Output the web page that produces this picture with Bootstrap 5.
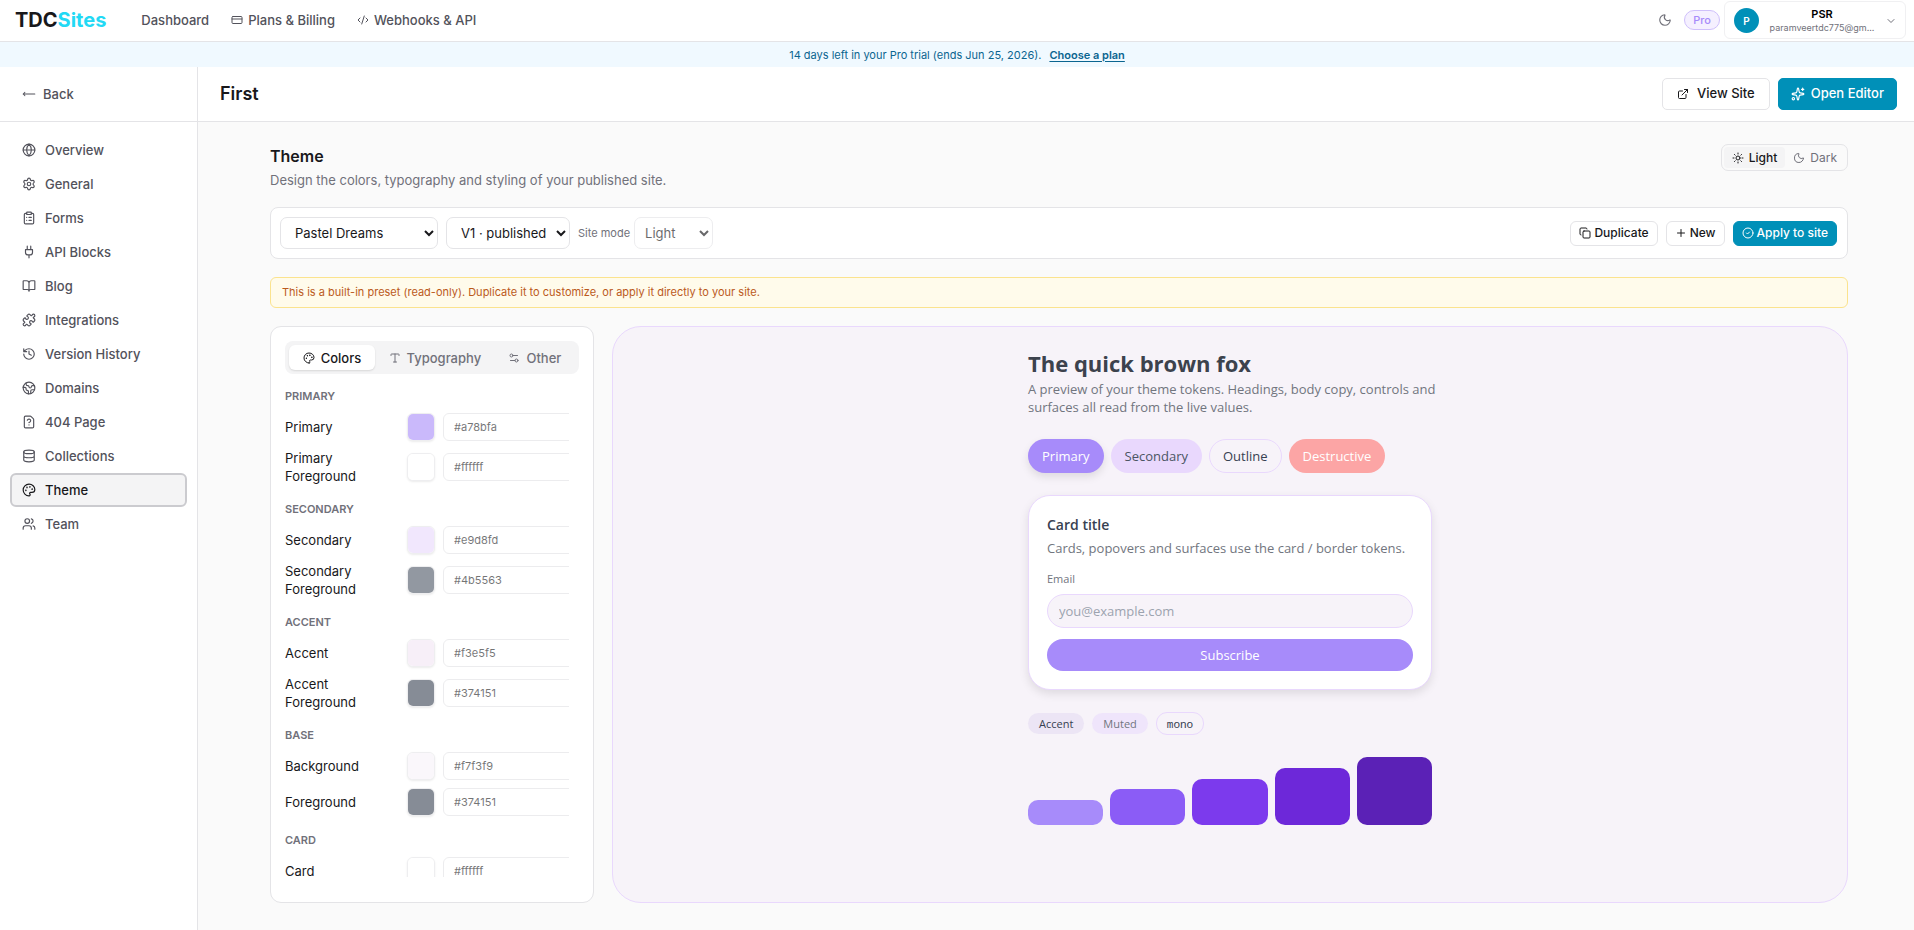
<!DOCTYPE html>
<html lang="en">
<head>
  <meta charset="UTF-8" />
  <meta name="viewport" content="width=device-width, initial-scale=1.0"/>
  <title>Theme - TDCSites</title>
  <link rel="stylesheet" href="https://cdn.jsdelivr.net/npm/bootstrap@5.3.0/dist/css/bootstrap.min.css">
  <style>
    body {
      background: #fafafa;
      font-family: Inter, "Liberation Sans", sans-serif;
      font-size: 13px;
      line-height: 18px;
      color: #18181b;
    }
    a { color: inherit; text-decoration: none; }
    .ico {
      width: 14px;
      height: 14px;
      flex: none;
      fill: none;
      stroke: currentColor;
      stroke-width: 2;
      stroke-linecap: round;
      stroke-linejoin: round;
    }
    .ico-sm { width: 12px; height: 12px; }
    .text-soft { color: #71717a; }
    .line { border-color: #e4e4e7 !important; }

    /* top bar */
    .topbar { height: 42px; padding: 0 8px 1px 15px; }
    .logo { font-size: 20px; font-weight: 700; margin-right: 35px; }
    .logo span { color: #22d9f5; }
    .toplinks { gap: 22px; }
    .toplink { color: #52525b; font-weight: 500; gap: 5px; }
    .plan {
      font-size: 11px;
      font-weight: 500;
      line-height: 18px;
      padding: 0 8px;
      color: #a78bfa;
      background: #f5f0ff;
      border: 1px solid #cfc0fb;
    }
    .user {
      width: 182px;
      height: 38px;
      padding: 1px 8px 0 9px;
      border: 1px solid #f0f0f2;
      border-radius: 6px;
      background: #fff;
    }
    .avatar {
      width: 25px;
      height: 25px;
      background: #0090b8;
      color: #fff;
      font-size: 10px;
      font-weight: 600;
    }
    .user-name { font-size: 11px; font-weight: 600; line-height: 14px; }
    .user-mail { font-size: 9px; line-height: 14px; }
    .trial { height: 25px; background: #f0f9ff; color: #0b6590; font-size: 11px; }
    .trial a { font-weight: 600; text-decoration: underline; text-underline-offset: 2px; }

    /* sidebar */
    .side { width: 198px; flex: none; min-height: calc(100vh - 67px); }
    .headrow { height: 55px; padding: 0 17px 0 22px; }
    .back { gap: 7px; color: #52525b; font-weight: 500; }
    .back .ico { stroke-width: 1.75; }
    .side-list { padding: 11px 10px; }
    .side-item {
      height: 34px;
      padding: 0 10px;
      gap: 9px;
      color: #52525b;
      font-weight: 500;
      border: 2px solid transparent;
      border-radius: 6px;
    }
    .side-item.current { background: #f4f4f5; border-color: #cbcbcf; color: #18181b; }

    /* buttons */
    .btn { display: inline-flex; align-items: center; justify-content: center; font-weight: 500; }
    .btn-plain, .btn-plain:hover { background: #fff; border-color: #e4e4e7; color: #18181b; }
    .btn-brand, .btn-brand:hover { background: #0090b8; border-color: #0090b8; color: #fff; }
    .btn-head { height: 32px; padding: 0 14px; gap: 8px; font-size: 13px; border-radius: 5px; }
    .btn-head.btn-brand { padding: 0 12px; gap: 6px; }
    .btn-tool { height: 25px; padding: 0 8px; gap: 3px; font-size: 12px; border-radius: 6px; }

    .page { padding: 22px 66px 28px 72px; }
    .site-title { font-size: 18px; font-weight: 600; line-height: 24px; }
    .page-top { margin-bottom: 16px; min-height: 47px; }
    .page-title { font-size: 16px; font-weight: 600; line-height: 24px; margin-bottom: 3px; }
    .mode { border: 1px solid #e4e4e7; border-radius: 7px; padding: 2px; height: 27px; }
    .mode button {
      border: 0;
      background: none;
      color: #71717a;
      font-size: 12px;
      line-height: 20px;
      padding: 0 8px;
      gap: 5px;
      border-radius: 4px;
    }
    .mode button.on { background: #f4f4f5; color: #18181b; font-weight: 500; }
    .bar { min-height: 52px; padding: 9px 10px 9px 9px; background: #fff; border-radius: 8px; }
    .pick {
      height: 32px;
      padding: 0 0 0 10px;
      border: 1px solid #e4e4e7;
      border-radius: 7px;
      background: #fff;
      color: #18181b;
    }
    .pick:disabled { opacity: 0.65; padding-left: 6px; }
    .pick-theme { width: 158px; }
    .pick-version { width: 124px; }
    .pick-mode { width: 79px; }
    .mode-label { font-size: 11px; }
    .note {
      margin: 18px 0;
      padding: 6px 11px;
      font-size: 11px;
      color: #bb5a1c;
      background: #fffbeb;
      border: 1px solid #fbe38e;
      border-radius: 6px;
      line-height: 17px;
    }

    /* token editor */
    .panels { height: calc(100vh - 353px); min-height: 400px; gap: 18px; }
    .editor { width: 324px; flex: none; padding: 14px 14px 25px; background: #fff; border-radius: 11px; }
    .tabs { height: 33px; padding: 4px; background: #f4f4f5; border-radius: 8px; }
    .tabs button {
      flex: 1 1 auto;
      border: 0;
      background: none;
      color: #71717a;
      font-weight: 500;
      gap: 6px;
      border-radius: 6px;
    }
    .tabs button.on { background: #fff; color: #18181b; box-shadow: 0 1px 2px rgba(0,0,0,0.12); }
    .tokens { flex: 1 1 0; overflow: hidden; margin-right: 10px; padding-top: 14px; }
    .token-group { margin-bottom: 16px; }
    .group-name { font-size: 11px; font-weight: 600; line-height: 16px; margin-bottom: 9px; }
    .token { gap: 8px; margin-bottom: 8px; }
    .token label { width: 114px; flex: none; padding-right: 20px; }
    .swatch {
      width: 28px;
      height: 28px;
      flex: none;
      padding: 0;
      border: 1px solid #e4e4e7;
      border-radius: 6px;
      overflow: hidden;
      opacity: 0.6;
      appearance: none;
      background: #fff;
      box-shadow: 0 1px 2px rgba(0,0,0,0.12);
    }
    .swatch::-webkit-color-swatch-wrapper { padding: 0; }
    .swatch::-webkit-color-swatch { border: 0; }
    .hex {
      width: 150px;
      height: 28px;
      flex: none;
      padding: 0 10px;
      font-size: 11px;
      color: #18181b;
      background: #fff;
      border: 1px solid #e0e0e4;
      border-radius: 6px;
      opacity: 0.6;
    }

    /* live preview */
    .preview {
      flex: 1 1 0;
      background: #f7f3f9;
      border: 1px solid #e9d8fd;
      border-radius: 29px;
      font-family: "Open Sans", "Noto Sans", sans-serif;
      color: #374151;
      overflow: hidden;
    }
    .sample { width: 404px; padding-top: 21px; }
    .sample h2 { font-size: 22px; font-weight: 700; line-height: 30px; margin-bottom: 2px; color: #3c424d; }
    .sample-lead { margin: 0 -12px 23px 0; }
    .text-dim { color: #71757e; }
    .pills { gap: 7px; margin-bottom: 22px; }
    .pill {
      height: 34px;
      padding: 0 13px;
      border: 1px solid transparent;
      border-radius: 17px;
      font-weight: 500;
    }
    .pill-primary { background: #a78bfa; color: #fff; box-shadow: 0 4px 8px rgba(0,0,0,0.1); }
    .pill-secondary { background: #e9d8fd; color: #4b5563; }
    .pill-outline { background: transparent; border-color: #e9d8fd; color: #374151; }
    .pill-danger { background: #fca5a5; color: #fff; }
    .sample-card {
      padding: 18px;
      background: #fff;
      border: 1px solid #e9d8fd;
      border-radius: 22px;
      box-shadow: 0 4px 10px rgba(0,0,0,0.1);
    }
    .sample-card h3 { font-size: 14px; font-weight: 600; line-height: 22px; margin-bottom: 3px; }
    .card-copy { margin-bottom: 14px; }
    .mail-label { font-size: 11px; line-height: 16px; margin-bottom: 7px; }
    .mail {
      height: 34px;
      margin-bottom: 11px;
      padding: 0 11px;
      background: #f7f3f9;
      border: 1px solid #e9d8fd;
      border-radius: 17px;
    }
    .mail::placeholder { color: #9ca3af; }
    .subscribe { height: 32px; border: 0; border-radius: 16px; background: #a78bfa; color: #fff; font-weight: 500; }
    .chips { gap: 8px; margin: 22px 0; }
    .chip { font-size: 11px; line-height: 21px; padding: 0 11px; border-radius: 11px; }
    .chip-accent { background: #ece5f5; }
    .chip-muted { background: #efe5fb; }
    .chip-mono { padding: 0 10px; border: 1px solid #e9d8fd; font-family: "Noto Sans Mono", "DejaVu Sans Mono", monospace; }
    .steps { gap: 7px; }
    .steps div { flex: 1 1 0; border-radius: 10px; }
  </style>
</head>
<body>

  <svg class="d-none" xmlns="http://www.w3.org/2000/svg">
    <symbol id="card" viewBox="0 0 24 24"><rect x="2" y="5" width="20" height="14" rx="2"/><path d="M2 10h20"/></symbol>
    <symbol id="code" viewBox="0 0 24 24"><path d="m18 16 4-4-4-4M6 8l-4 4 4 4M14.5 4l-5 16"/></symbol>
    <symbol id="moon" viewBox="0 0 24 24"><path d="M20.985 12.486a9 9 0 1 1-9.473-9.472c.405-.022.617.46.402.803a6 6 0 0 0 8.268 8.268c.344-.215.825-.004.803.401"/></symbol>
    <symbol id="sun" viewBox="0 0 24 24"><circle cx="12" cy="12" r="4"/><path d="M12 2v2M12 20v2M4.93 4.93l1.41 1.41M17.66 17.66l1.41 1.41M2 12h2M20 12h2M6.34 17.66l-1.41 1.41M19.07 4.93l-1.41 1.41"/></symbol>
    <symbol id="chevron" viewBox="0 0 24 24"><path d="m6 9 6 6 6-6"/></symbol>
    <symbol id="left" viewBox="0 0 24 24"><path d="M5 9l-3 3 3 3M2 12h20"/></symbol>
    <symbol id="external" viewBox="0 0 24 24"><path d="M15 3h6v6M10 14 21 3M18 13v6a2 2 0 0 1-2 2H5a2 2 0 0 1-2-2V8a2 2 0 0 1 2-2h6"/></symbol>
    <symbol id="sparkles" viewBox="0 0 24 24"><path d="M11.017 2.814a1 1 0 0 1 1.966 0l1.051 5.558a2 2 0 0 0 1.594 1.594l5.558 1.051a1 1 0 0 1 0 1.966l-5.558 1.051a2 2 0 0 0-1.594 1.594l-1.051 5.558a1 1 0 0 1-1.966 0l-1.051-5.558a2 2 0 0 0-1.594-1.594l-5.558-1.051a1 1 0 0 1 0-1.966l5.558-1.051a2 2 0 0 0 1.594-1.594zM20 2v4M22 4h-4"/><circle cx="4" cy="20" r="2"/></symbol>
    <symbol id="globe" viewBox="0 0 24 24"><circle cx="12" cy="12" r="10"/><path d="M12 2a14.5 14.5 0 0 0 0 20 14.5 14.5 0 0 0 0-20M2 12h20"/></symbol>
    <symbol id="gear" viewBox="0 0 24 24"><path d="M9.671 4.136a2.34 2.34 0 0 1 4.659 0 2.34 2.34 0 0 0 3.319 1.915 2.34 2.34 0 0 1 2.33 4.033 2.34 2.34 0 0 0 0 3.831 2.34 2.34 0 0 1-2.33 4.033 2.34 2.34 0 0 0-3.319 1.915 2.34 2.34 0 0 1-4.659 0 2.34 2.34 0 0 0-3.32-1.915 2.34 2.34 0 0 1-2.33-4.033 2.34 2.34 0 0 0 0-3.831A2.34 2.34 0 0 1 6.35 6.051a2.34 2.34 0 0 0 3.319-1.915"/><circle cx="12" cy="12" r="3"/></symbol>
    <symbol id="clipboard" viewBox="0 0 24 24"><rect x="8" y="2" width="8" height="4" rx="1"/><path d="M16 4h2a2 2 0 0 1 2 2v14a2 2 0 0 1-2 2H6a2 2 0 0 1-2-2V6a2 2 0 0 1 2-2h2M12 11h4M12 16h4M8 11h.01M8 16h.01"/></symbol>
    <symbol id="plug" viewBox="0 0 24 24"><path d="M12 22v-5M9 8V2M15 8V2M18 8v5a4 4 0 0 1-4 4h-4a4 4 0 0 1-4-4V8Z"/></symbol>
    <symbol id="book" viewBox="0 0 24 24"><path d="M12 7v14M3 18a1 1 0 0 1-1-1V4a1 1 0 0 1 1-1h5a4 4 0 0 1 4 4 4 4 0 0 1 4-4h5a1 1 0 0 1 1 1v13a1 1 0 0 1-1 1h-6a3 3 0 0 0-3 3 3 3 0 0 0-3-3z"/></symbol>
    <symbol id="puzzle" viewBox="0 0 24 24"><path d="M15.39 4.39a1 1 0 0 0 1.68-.474 2.5 2.5 0 1 1 3.014 3.015 1 1 0 0 0-.474 1.68l1.683 1.682a2.414 2.414 0 0 1 0 3.414L19.61 15.39a1 1 0 0 1-1.68-.474 2.5 2.5 0 1 0-3.014 3.015 1 1 0 0 1 .474 1.68l-1.683 1.682a2.414 2.414 0 0 1-3.414 0L8.61 19.61a1 1 0 0 0-1.68.474 2.5 2.5 0 1 1-3.014-3.015 1 1 0 0 0 .474-1.68l-1.683-1.682a2.414 2.414 0 0 1 0-3.414L4.39 8.61a1 1 0 0 1 1.68.474 2.5 2.5 0 1 0 3.014-3.015 1 1 0 0 1-.474-1.68l1.683-1.682a2.414 2.414 0 0 1 3.414 0z"/></symbol>
    <symbol id="history" viewBox="0 0 24 24"><path d="M3 12a9 9 0 1 0 9-9 9.75 9.75 0 0 0-6.74 2.74L3 8M3 3v5h5M12 7v5l4 2"/></symbol>
    <symbol id="earth" viewBox="0 0 24 24"><path d="M21.54 15H17a2 2 0 0 0-2 2v4.54M7 3.34V5a3 3 0 0 0 3 3 2 2 0 0 1 2 2c0 1.1.9 2 2 2a2 2 0 0 0 2-2c0-1.1.9-2 2-2h3.17M11 21.95V18a2 2 0 0 0-2-2 2 2 0 0 1-2-2v-1a2 2 0 0 0-2-2H2.05"/><circle cx="12" cy="12" r="10"/></symbol>
    <symbol id="missing" viewBox="0 0 24 24"><path d="M6 22a2 2 0 0 1-2-2V4a2 2 0 0 1 2-2h8a2.4 2.4 0 0 1 1.704.706l3.588 3.588A2.4 2.4 0 0 1 20 8v12a2 2 0 0 1-2 2zM12 17h.01M9.1 9a3 3 0 0 1 5.82 1c0 2-3 3-3 3"/></symbol>
    <symbol id="database" viewBox="0 0 24 24"><ellipse cx="12" cy="5" rx="9" ry="3"/><path d="M3 5v14a9 3 0 0 0 18 0V5M3 12a9 3 0 0 0 18 0"/></symbol>
    <symbol id="palette" viewBox="0 0 24 24"><path d="M12 22a1 1 0 0 1 0-20 10 9 0 0 1 10 9 5 5 0 0 1-5 5h-2.25a1.75 1.75 0 0 0-1.4 2.8l.3.4a1.75 1.75 0 0 1-1.4 2.8z"/><circle cx="13.5" cy="6.5" r=".5"/><circle cx="17.5" cy="10.5" r=".5"/><circle cx="6.5" cy="12.5" r=".5"/><circle cx="8.5" cy="7.5" r=".5"/></symbol>
    <symbol id="users" viewBox="0 0 24 24"><path d="M16 21v-2a4 4 0 0 0-4-4H6a4 4 0 0 0-4 4v2M22 21v-2a4 4 0 0 0-3-3.87M16 3.128a4 4 0 0 1 0 7.744"/><circle cx="9" cy="7" r="4"/></symbol>
    <symbol id="copy" viewBox="0 0 24 24"><rect x="8" y="8" width="14" height="14" rx="2"/><path d="M4 16c-1.1 0-2-.9-2-2V4c0-1.1.9-2 2-2h10c1.1 0 2 .9 2 2"/></symbol>
    <symbol id="plus" viewBox="0 0 24 24"><path d="M5 12h14M12 5v14"/></symbol>
    <symbol id="check" viewBox="0 0 24 24"><circle cx="12" cy="12" r="10"/><path d="m9 12 2 2 4-4"/></symbol>
    <symbol id="type" viewBox="0 0 24 24"><path d="M12 4v16M4 7V5a1 1 0 0 1 1-1h14a1 1 0 0 1 1 1v2M9 20h6"/></symbol>
    <symbol id="sliders" viewBox="0 0 24 24"><path d="M14 17H5M19 7h-9"/><circle cx="17" cy="17" r="3"/><circle cx="7" cy="7" r="3"/></symbol>
  </svg>

  <header class="topbar d-flex align-items-center bg-white border-bottom line">
    <a class="logo" href="#">TDC<span>Sites</span></a>
    <nav class="toplinks d-flex align-items-center">
      <a class="toplink d-flex align-items-center" href="#">Dashboard</a>
      <a class="toplink d-flex align-items-center" href="#"><svg class="ico ico-sm"><use href="#card"/></svg>Plans &amp; Billing</a>
      <a class="toplink d-flex align-items-center" href="#"><svg class="ico ico-sm"><use href="#code"/></svg>Webhooks &amp; API</a>
    </nav>
    <div class="d-flex align-items-center ms-auto">
      <button class="btn p-0 border-0 text-soft me-2" aria-label="Toggle dark mode"><svg class="ico"><use href="#moon"/></svg></button>
      <span class="plan rounded-pill ms-1 me-1">Pro</span>
      <button class="user d-flex align-items-center">
        <span class="avatar rounded-circle d-flex align-items-center justify-content-center">P</span>
        <span class="d-flex flex-column flex-fill text-center">
          <span class="user-name">PSR</span>
          <span class="user-mail text-soft">paramveertdc775@gm...</span>
        </span>
        <svg class="ico ico-sm text-soft"><use href="#chevron"/></svg>
      </button>
    </div>
  </header>

  <div class="trial d-flex align-items-center justify-content-center gap-2">
    <span>14 days left in your Pro trial (ends Jun 25, 2026).</span><a href="#">Choose a plan</a>
  </div>

  <div class="d-flex">
    <aside class="side bg-white border-end line">
      <div class="headrow d-flex align-items-center border-bottom line">
        <a class="back d-flex align-items-center" href="#"><svg class="ico"><use href="#left"/></svg>Back</a>
      </div>
      <nav class="side-list d-flex flex-column">
        <a class="side-item d-flex align-items-center" href="#"><svg class="ico"><use href="#globe"/></svg>Overview</a>
        <a class="side-item d-flex align-items-center" href="#"><svg class="ico"><use href="#gear"/></svg>General</a>
        <a class="side-item d-flex align-items-center" href="#"><svg class="ico"><use href="#clipboard"/></svg>Forms</a>
        <a class="side-item d-flex align-items-center" href="#"><svg class="ico"><use href="#plug"/></svg>API Blocks</a>
        <a class="side-item d-flex align-items-center" href="#"><svg class="ico"><use href="#book"/></svg>Blog</a>
        <a class="side-item d-flex align-items-center" href="#"><svg class="ico"><use href="#puzzle"/></svg>Integrations</a>
        <a class="side-item d-flex align-items-center" href="#"><svg class="ico"><use href="#history"/></svg>Version History</a>
        <a class="side-item d-flex align-items-center" href="#"><svg class="ico"><use href="#earth"/></svg>Domains</a>
        <a class="side-item d-flex align-items-center" href="#"><svg class="ico"><use href="#missing"/></svg>404 Page</a>
        <a class="side-item d-flex align-items-center" href="#"><svg class="ico"><use href="#database"/></svg>Collections</a>
        <a class="side-item current d-flex align-items-center" href="#" aria-current="page"><svg class="ico"><use href="#palette"/></svg>Theme</a>
        <a class="side-item d-flex align-items-center" href="#"><svg class="ico"><use href="#users"/></svg>Team</a>
      </nav>
    </aside>

    <div class="flex-fill">
      <div class="headrow d-flex align-items-center bg-white border-bottom line">
        <h1 class="site-title mb-0">First</h1>
        <div class="d-flex gap-2 ms-auto">
          <a class="btn btn-plain btn-head" href="#"><svg class="ico ico-sm"><use href="#external"/></svg>View Site</a>
          <a class="btn btn-brand btn-head" href="#"><svg class="ico"><use href="#sparkles"/></svg>Open Editor</a>
        </div>
      </div>

      <main class="page">
        <div class="page-top d-flex justify-content-between align-items-start">
          <div>
            <h2 class="page-title">Theme</h2>
            <p class="text-soft mb-0">Design the colors, typography and styling of your published site.</p>
          </div>
          <div class="mode d-flex">
            <button class="on d-flex align-items-center"><svg class="ico ico-sm"><use href="#sun"/></svg>Light</button>
            <button class="d-flex align-items-center"><svg class="ico ico-sm"><use href="#moon"/></svg>Dark</button>
          </div>
        </div>

        <div class="bar d-flex align-items-center border line gap-2">
          <select class="pick pick-theme" aria-label="Theme"><option>Pastel Dreams</option></select>
          <select class="pick pick-version" aria-label="Version"><option>V1 · published</option></select>
          <div class="d-flex align-items-center gap-1">
            <label class="text-soft mode-label" for="siteMode">Site mode</label>
            <select class="pick pick-mode" id="siteMode" disabled><option>Light</option></select>
          </div>
          <div class="d-flex gap-2 ms-auto">
            <button class="btn btn-plain btn-tool"><svg class="ico ico-sm"><use href="#copy"/></svg>Duplicate</button>
            <button class="btn btn-plain btn-tool"><svg class="ico ico-sm"><use href="#plus"/></svg>New</button>
            <button class="btn btn-brand btn-tool"><svg class="ico ico-sm"><use href="#check"/></svg>Apply to site</button>
          </div>
        </div>

        <div class="note">This is a built-in preset (read-only). Duplicate it to customize, or apply it directly to your site.</div>

        <div class="panels d-flex">
          <section class="editor border line d-flex flex-column">
            <div class="tabs d-flex">
              <button class="on d-flex align-items-center justify-content-center"><svg class="ico ico-sm"><use href="#palette"/></svg>Colors</button>
              <button class="d-flex align-items-center justify-content-center"><svg class="ico ico-sm"><use href="#type"/></svg>Typography</button>
              <button class="d-flex align-items-center justify-content-center"><svg class="ico ico-sm"><use href="#sliders"/></svg>Other</button>
            </div>
            <div class="tokens" id="tokens"></div>
          </section>

          <section class="preview d-flex justify-content-center">
            <div class="sample">
              <h2>The quick brown fox</h2>
              <p class="text-dim sample-lead">A preview of your theme tokens. Headings, body copy, controls and surfaces all read from the live values.</p>
              <div class="pills d-flex">
                <button class="pill pill-primary">Primary</button>
                <button class="pill pill-secondary">Secondary</button>
                <button class="pill pill-outline">Outline</button>
                <button class="pill pill-danger">Destructive</button>
              </div>
              <div class="sample-card d-flex flex-column">
                <h3>Card title</h3>
                <p class="text-dim card-copy">Cards, popovers and surfaces use the card / border tokens.</p>
                <label class="text-dim mail-label" for="mail">Email</label>
                <input class="mail" id="mail" type="email" placeholder="you@example.com">
                <button class="subscribe">Subscribe</button>
              </div>
              <div class="chips d-flex align-items-center">
                <span class="chip chip-accent">Accent</span>
                <span class="chip chip-muted text-dim">Muted</span>
                <span class="chip chip-mono">mono</span>
              </div>
              <div class="steps d-flex align-items-end" id="steps"></div>
            </div>
          </section>
        </div>
      </main>
    </div>
  </div>

  <script src="https://cdn.jsdelivr.net/npm/bootstrap@5.3.0/dist/js/bootstrap.bundle.min.js"></script>
  <script>
    const groups = [
      ["PRIMARY", [["Primary", "#a78bfa"], ["Primary Foreground", "#ffffff"]]],
      ["SECONDARY", [["Secondary", "#e9d8fd"], ["Secondary Foreground", "#4b5563"]]],
      ["ACCENT", [["Accent", "#f3e5f5"], ["Accent Foreground", "#374151"]]],
      ["BASE", [["Background", "#f7f3f9"], ["Foreground", "#374151"]]],
      ["CARD", [["Card", "#ffffff"]]]
    ];

    document.getElementById("tokens").innerHTML = groups.map(([title, rows]) => `
      <div class="token-group">
        <div class="group-name text-soft">${title}</div>
        ${rows.map(([name, hex]) => {
          const id = name.toLowerCase().replace(" ", "-");
          return `
          <div class="token d-flex align-items-center">
            <label for="${id}">${name}</label>
            <input class="swatch" type="color" value="${hex}" aria-label="${name} color" disabled>
            <input class="hex" id="${id}" type="text" value="${hex}" disabled>
          </div>`;
        }).join("")}
      </div>`).join("");

    const steps = [["#a78bfa", 25], ["#8b5cf6", 36], ["#7c3aed", 46], ["#6d28d9", 57], ["#5b21b6", 68]];
    document.getElementById("steps").innerHTML = steps
      .map(([color, height]) => `<div style="height:${height}px;background:${color}"></div>`)
      .join("");
  </script>

</body>
</html>
